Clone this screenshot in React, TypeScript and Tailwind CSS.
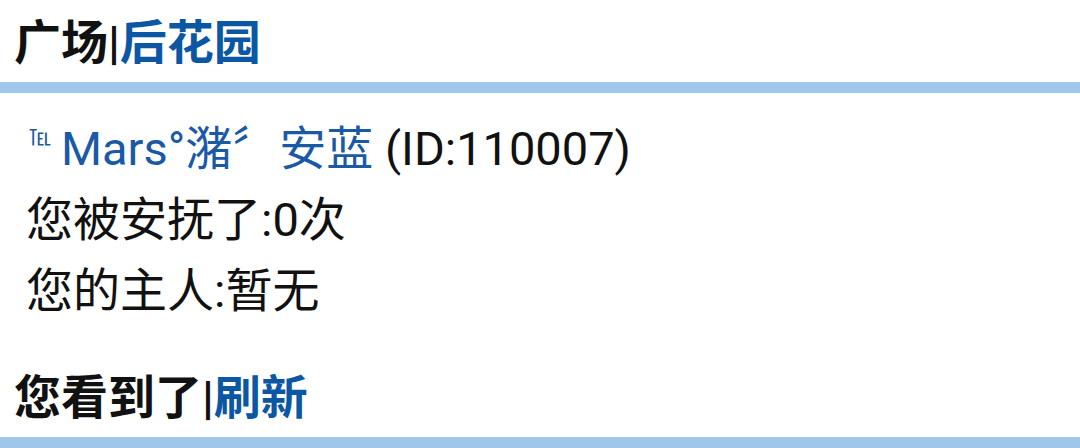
const App = () => {
  return (
    <div
      className="w-[1080px] h-[448px] bg-white overflow-hidden text-[#111]"
      style={{ fontFamily: 'Roboto, "Noto Sans CJK SC", sans-serif' }}
    >
      <div className="pl-[14px] pt-[8px] pb-[5px] text-[47px] leading-[69px] font-bold border-b-[11px] border-[#a0c6ea]">
        广场|<a className="text-[#0b57a4]">后花园</a>
      </div>
      <div className="pl-[26px] pt-[20px] text-[47px] leading-[71px]">
        <div>
          <a className="text-[#1a5aa5]">
            <span className="inline-block align-top text-[22px] leading-[20px] mt-[15px] mr-[10px] ml-[3px]">℡</span>
            Mars°潴〞安蓝
          </a>{" "}
          (ID:110007)
        </div>
        <div>您被安抚了:0次</div>
        <div>您的主人:暂无</div>
      </div>
      <div className="mt-[37px] pl-[14px] pb-[5px] text-[47px] leading-[69px] font-bold border-b-[11px] border-[#a0c6ea]">
        您看到了|<a className="text-[#0b57a4]">刷新</a>
      </div>
    </div>
  );
};

export default App;
